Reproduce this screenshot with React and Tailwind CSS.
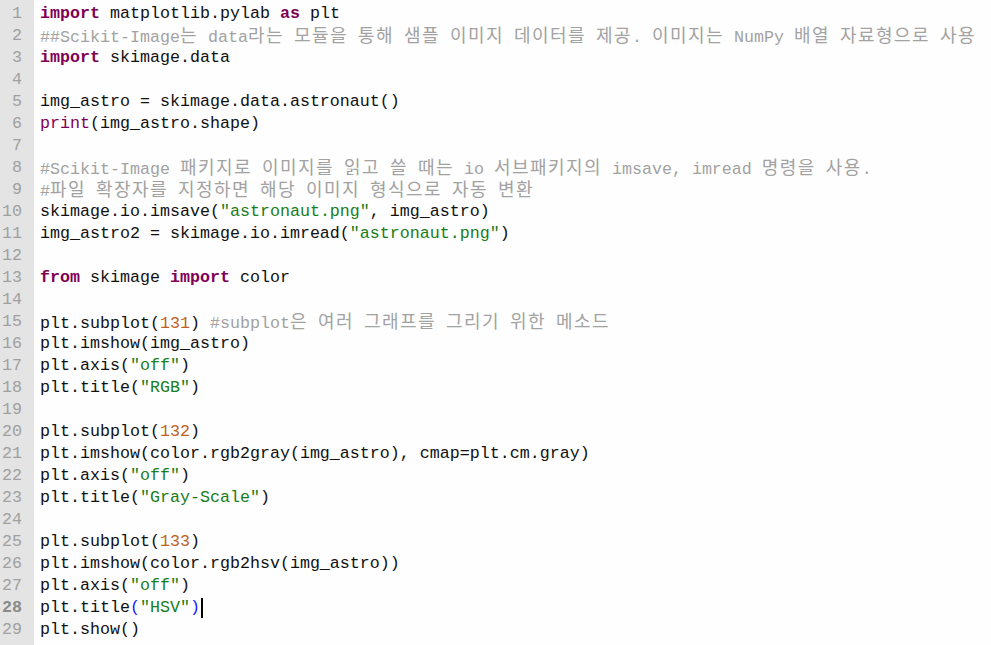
const KW = 'font-bold text-[#7f0055]';
const STR = 'text-[#1a7d1a]';
const NUM = 'text-[#c0601c]';
const CMT = 'text-[#a2a2a2]';

// each line is a list of [text, class]
const lines = [
  [['import', KW], [' matplotlib.pylab '], ['as', KW], [' plt']],
  [['##Scikit-Image는 data라는 모듈을 통해 샘플 이미지 데이터를 제공. 이미지는 NumPy 배열 자료형으로 사용', CMT]],
  [['import', KW], [' skimage.data']],
  [],
  [['img_astro = skimage.data.astronaut()']],
  [['print', 'text-[#7f0055]'], ['(img_astro.shape)']],
  [],
  [['#Scikit-Image 패키지로 이미지를 읽고 쓸 때는 io 서브패키지의 imsave, imread 명령을 사용.', CMT]],
  [['#파일 확장자를 지정하면 해당 이미지 형식으로 자동 변환', CMT]],
  [['skimage.io.imsave('], ['"astronaut.png"', STR], [', img_astro)']],
  [['img_astro2 = skimage.io.imread('], ['"astronaut.png"', STR], [')']],
  [],
  [['from', KW], [' skimage '], ['import', KW], [' color']],
  [],
  [['plt.subplot('], ['131', NUM], [') '], ['#subplot은 여러 그래프를 그리기 위한 메소드', CMT]],
  [['plt.imshow(img_astro)']],
  [['plt.axis('], ['"off"', STR], [')']],
  [['plt.title('], ['"RGB"', STR], [')']],
  [],
  [['plt.subplot('], ['132', NUM], [')']],
  [['plt.imshow(color.rgb2gray(img_astro), cmap=plt.cm.gray)']],
  [['plt.axis('], ['"off"', STR], [')']],
  [['plt.title('], ['"Gray-Scale"', STR], [')']],
  [],
  [['plt.subplot('], ['133', NUM], [')']],
  [['plt.imshow(color.rgb2hsv(img_astro))']],
  [['plt.axis('], ['"off"', STR], [')']],
  [['plt.title'], ['(', 'text-[#2020ff]'], ['"HSV"', STR], [')', 'text-[#2020ff]'], ['CURSOR']],
  [['plt.show()']],
];

// Korean glyphs take 18px cells against the 10px ascii cells
function Chunk({ text }) {
  const parts = text.split(/([\uAC00-\uD7A3]+)/);
  return parts.map((p, i) =>
    /[\uAC00-\uD7A3]/.test(p) ? (
      <span
        key={i}
        className="text-[18px] font-normal tracking-[1.44px]"
        style={{ fontFamily: '"Noto Sans CJK KR", sans-serif' }}
      >
        {p}
      </span>
    ) : (
      p
    )
  );
}

export default function App() {
  return (
    <div
      className="w-[991px] h-[645px] bg-[#fefefe] flex overflow-hidden"
      style={{ fontFamily: '"Liberation Mono", "DejaVu Sans Mono", monospace' }}
    >
      <div className="w-[34px] bg-[#e4e4e4] pt-[3px] shrink-0">
        {lines.map((_, i) => (
          <div
            key={i}
            className={`h-[22px] leading-[22px] text-[16.67px] text-right pr-[12px] ${
              i === 27 ? 'text-[#8a8a8a] font-bold' : 'text-[#a0a0a0]'
            }`}
          >
            {i + 1}
          </div>
        ))}
      </div>
      <div className="pl-[6px] pt-[3px] text-[#111]">
        {lines.map((tokens, i) => (
          <div key={i} className="h-[22px] leading-[22px] text-[16.67px] whitespace-pre flex items-center">
            <span>
              {tokens.map(([t, cls], j) =>
                t === 'CURSOR' ? (
                  <span key={j} className="inline-block w-[2px] h-[20px] bg-black align-middle ml-px" />
                ) : (
                  <span key={j} className={cls || ''}>
                    <Chunk text={t} />
                  </span>
                )
              )}
            </span>
          </div>
        ))}
      </div>
    </div>
  );
}
